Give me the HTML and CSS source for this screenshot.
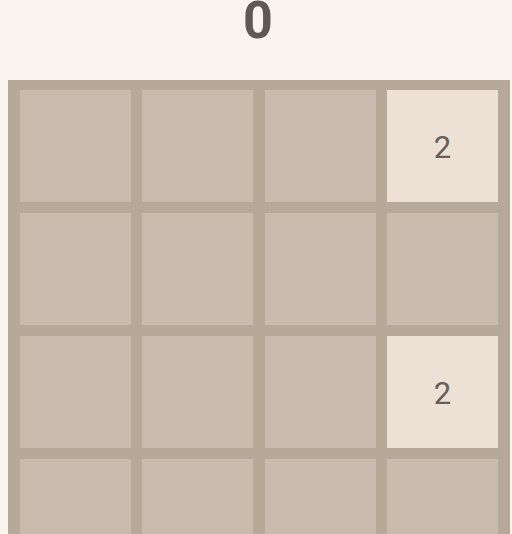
FILE: index.html
```html
<!DOCTYPE html>
<html lang="en">
<head>
<meta charset="utf-8">
<title>2048</title>
<link rel="stylesheet" href="styles.css">
</head>
<body>
  <header class="score-bar">
    <div class="score">0</div>
  </header>
  <main class="board">
    <div class="tile"></div>
    <div class="tile"></div>
    <div class="tile"></div>
    <div class="tile tile-2">2</div>

    <div class="tile"></div>
    <div class="tile"></div>
    <div class="tile"></div>
    <div class="tile"></div>

    <div class="tile"></div>
    <div class="tile"></div>
    <div class="tile"></div>
    <div class="tile tile-2">2</div>

    <div class="tile"></div>
    <div class="tile"></div>
    <div class="tile"></div>
    <div class="tile"></div>
  </main>
</body>
</html>
```

FILE: styles.css
```css
html, body {
  margin: 0;
  padding: 0;
}

body {
  background: #f9f5ee;
  font-family: Roboto, "Noto Sans", sans-serif;
  overflow: hidden;
  height: 534px;
}

.score-bar {
  height: 80px;
  display: flex;
  justify-content: center;
  align-items: flex-start;
}

.score {
  font-size: 52px;
  font-weight: 700;
  line-height: 0.8;
  margin-left: 4px;
  color: #5e5955;
}

.board {
  margin-left: 8px;
  width: 502px;
  box-sizing: border-box;
  padding: 10px 12px;
  background: #b6a99a;
  display: grid;
  grid-template-columns: repeat(4, 111px);
  grid-auto-rows: 112px;
  column-gap: 11.33px;
  row-gap: 11px;
}

.tile {
  background: #c8bbad;
  display: flex;
  align-items: center;
  justify-content: center;
  font-size: 31px;
  color: #675e57;
}

.tile-2 {
  background: #ede1d6;
  padding-top: 3px;
  box-sizing: border-box;
}
```
